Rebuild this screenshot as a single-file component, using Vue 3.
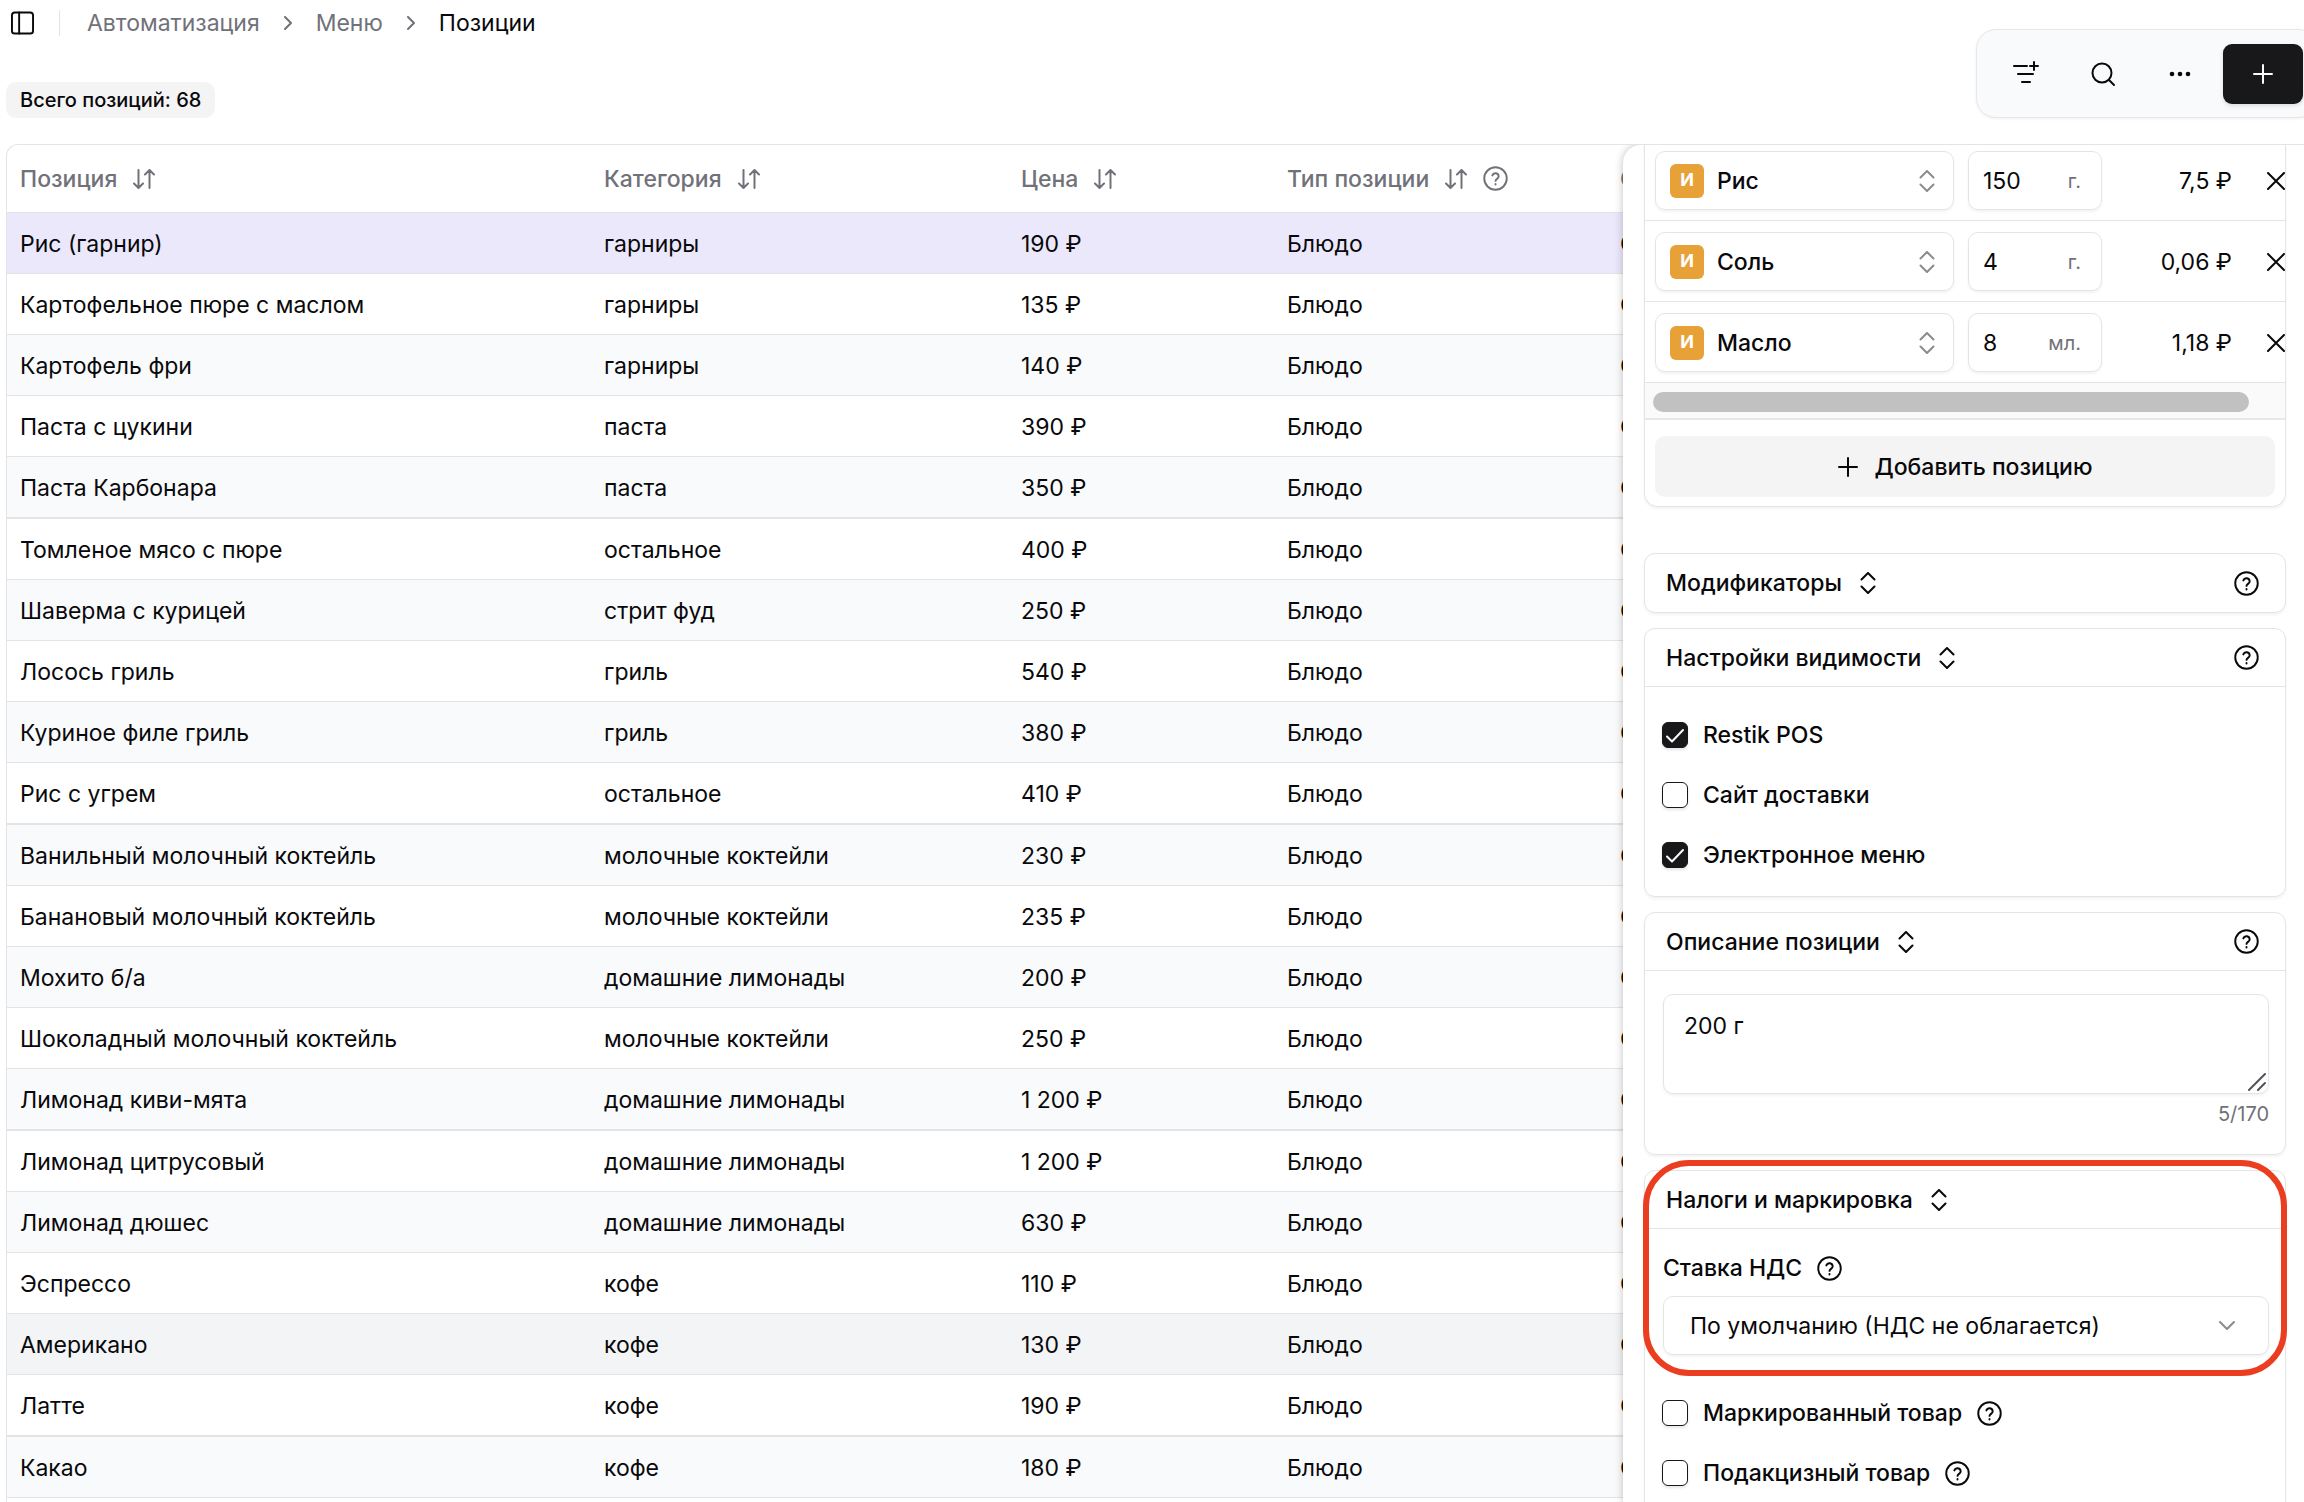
<template>
  <div class="page">
    <header class="page-header">
      <div class="header-left">
        <nav class="breadcrumbs" aria-label="breadcrumb">
          <button type="button" class="icon-btn" aria-label="Меню">
            <svg class="icon-panel" viewBox="0 0 24 24">
              <rect x="1" y="1" width="22" height="22" rx="3" />
              <path d="M8.5 1v22" />
            </svg>
          </button>
          <span class="divider"></span>
          <a href="#" class="crumb">Автоматизация</a>
          <svg class="icon-crumb" viewBox="0 0 8 14"><path d="M1 1l6 6-6 6" /></svg>
          <a href="#" class="crumb">Меню</a>
          <svg class="icon-crumb" viewBox="0 0 8 14"><path d="M1 1l6 6-6 6" /></svg>
          <span class="crumb current">Позиции</span>
        </nav>
        <span class="total">Всего позиций: 68</span>
      </div>

      <div class="toolbar">
        <button type="button" class="tool-btn" aria-label="Фильтр">
          <svg class="icon-tool" viewBox="0 0 26 26">
            <path d="M1 5h13M17 5h8M21 1v8M5 13h15M9 21h8" />
          </svg>
        </button>
        <button type="button" class="tool-btn" aria-label="Поиск">
          <svg class="icon-tool" viewBox="0 0 26 26">
            <circle cx="12" cy="12" r="9.5" />
            <path d="M19 19l5 5" />
          </svg>
        </button>
        <button type="button" class="tool-btn" aria-label="Ещё">
          <svg class="icon-tool dots" viewBox="0 0 26 26">
            <circle cx="5" cy="13" r="2.3" />
            <circle cx="13" cy="13" r="2.3" />
            <circle cx="21" cy="13" r="2.3" />
          </svg>
        </button>
        <button type="button" class="add-btn" aria-label="Добавить">
          <svg class="icon-plus" viewBox="0 0 20 20"><path d="M10 1v18M1 10h18" /></svg>
        </button>
      </div>
    </header>

    <main class="content">
      <div class="table-area">
        <table>
          <colgroup>
            <col />
            <col class="col-category" />
            <col class="col-price" />
            <col class="col-type" />
            <col class="col-cut" />
          </colgroup>
          <thead>
            <tr>
              <th v-for="column in columns" :key="column.title">
                <span class="th-inner">
                  {{ column.title }}
                  <svg v-if="column.sortable" class="icon-sort" viewBox="0 0 22 20">
                    <path d="M5.500 1v18M1 14.500L5.500 19l4.500-4.500M16.500 19V1M12 5.500L16.500 1L21 5.500" />
                  </svg>
                  <svg v-if="column.help" class="icon-help" viewBox="0 0 26 26">
                    <circle cx="13" cy="13" r="11.700" />
                    <path d="M9.700 9.800a3.400 3.400 0 0 1 6.600 1.100c0 2.200-3.300 2.700-3.300 4.600M13 18.600v.600" />
                  </svg>
                </span>
              </th>
            </tr>
          </thead>
          <tbody>
            <tr v-for="item in items" :key="item.name" :class="item.state">
              <td>{{ item.name }}</td>
              <td>{{ item.category }}</td>
              <td>{{ item.price }} ₽</td>
              <td>Блюдо</td>
              <td>С</td>
            </tr>
          </tbody>
        </table>
      </div>

      <aside class="panel">
        <section class="card ingredients">
          <div v-for="row in ingredients" :key="row.name" class="ingredient">
            <div class="field ingredient-name">
              <span class="badge">И</span>
              <select :aria-label="row.name">
                <option>{{ row.name }}</option>
              </select>
              <svg class="icon-updown muted" viewBox="0 0 16 22">
                <path d="M1.500 7.500L8 1l6.500 6.500M1.500 14.500L8 21l6.500-6.500" />
              </svg>
            </div>
            <label class="field amount">
              <input v-model="row.amount" type="text" :aria-label="row.name" />
              <span>{{ row.unit }}</span>
            </label>
            <span class="cost">{{ row.cost }} ₽</span>
            <button type="button" class="icon-btn" aria-label="Удалить">
              <svg class="icon-close" viewBox="0 0 18 18"><path d="M1 1l16 16M17 1L1 17" /></svg>
            </button>
          </div>
          <div class="scroll-track"><div class="scroll-thumb"></div></div>
          <div class="add-row">
            <button type="button" class="add-position">
              <svg class="icon-plus" viewBox="0 0 20 20"><path d="M10 1v18M1 10h18" /></svg>
              Добавить позицию
            </button>
          </div>
        </section>

        <section class="card">
          <div class="card-head">
            <button type="button" class="card-title">
              Модификаторы
              <svg class="icon-updown" viewBox="0 0 16 22">
                <path d="M1.500 7.500L8 1l6.500 6.500M1.500 14.500L8 21l6.500-6.500" />
              </svg>
            </button>
            <svg class="icon-help" viewBox="0 0 26 26">
              <circle cx="13" cy="13" r="11.700" />
              <path d="M9.700 9.800a3.400 3.400 0 0 1 6.600 1.100c0 2.200-3.300 2.700-3.300 4.600M13 18.600v.600" />
            </svg>
          </div>
        </section>

        <section class="card">
          <div class="card-head opened">
            <button type="button" class="card-title">
              Настройки видимости
              <svg class="icon-updown" viewBox="0 0 16 22">
                <path d="M1.500 7.500L8 1l6.500 6.500M1.500 14.500L8 21l6.500-6.500" />
              </svg>
            </button>
            <svg class="icon-help" viewBox="0 0 26 26">
              <circle cx="13" cy="13" r="11.700" />
              <path d="M9.700 9.800a3.400 3.400 0 0 1 6.600 1.100c0 2.200-3.300 2.700-3.300 4.600M13 18.600v.600" />
            </svg>
          </div>
          <div class="checks visibility">
            <label v-for="option in visibility" :key="option.label" class="check">
              <span class="box">
                <input v-model="option.checked" type="checkbox" />
                <svg v-if="option.checked" viewBox="0 0 26 26"><path d="M5 14.500l5 5L21 8" /></svg>
              </span>
              {{ option.label }}
            </label>
          </div>
        </section>

        <section class="card">
          <div class="card-head opened">
            <button type="button" class="card-title">
              Описание позиции
              <svg class="icon-updown" viewBox="0 0 16 22">
                <path d="M1.500 7.500L8 1l6.500 6.500M1.500 14.500L8 21l6.500-6.500" />
              </svg>
            </button>
            <svg class="icon-help" viewBox="0 0 26 26">
              <circle cx="13" cy="13" r="11.700" />
              <path d="M9.700 9.800a3.400 3.400 0 0 1 6.600 1.100c0 2.200-3.300 2.700-3.300 4.600M13 18.600v.600" />
            </svg>
          </div>
          <div class="description">
            <div class="textarea-wrap">
              <textarea v-model="description" aria-label="Описание позиции"></textarea>
              <svg class="icon-resize" viewBox="0 0 18 18"><path d="M1 17L17 1M10 17l7-7" /></svg>
            </div>
            <span class="counter">5/170</span>
          </div>
        </section>

        <section class="card">
          <div class="tax">
            <div class="card-head opened">
              <button type="button" class="card-title">
                Налоги и маркировка
                <svg class="icon-updown" viewBox="0 0 16 22">
                  <path d="M1.500 7.500L8 1l6.500 6.500M1.500 14.500L8 21l6.500-6.500" />
                </svg>
              </button>
            </div>
            <div class="tax-body">
              <label for="vat" class="tax-label">
                Ставка НДС
                <svg class="icon-help" viewBox="0 0 26 26">
                  <circle cx="13" cy="13" r="11.700" />
                  <path d="M9.700 9.800a3.400 3.400 0 0 1 6.600 1.100c0 2.200-3.300 2.700-3.300 4.600M13 18.600v.600" />
                </svg>
              </label>
              <div class="field vat">
                <select id="vat">
                  <option>По умолчанию (НДС не облагается)</option>
                </select>
                <svg class="icon-down muted" viewBox="0 0 16 10"><path d="M1 1l7 7 7-7" /></svg>
              </div>
            </div>
            <div class="highlight"></div>
          </div>
          <div class="checks marking">
            <label v-for="option in marking" :key="option.label" class="check">
              <span class="box">
                <input v-model="option.checked" type="checkbox" />
                <svg v-if="option.checked" viewBox="0 0 26 26"><path d="M5 14.500l5 5L21 8" /></svg>
              </span>
              {{ option.label }}
              <svg class="icon-help" viewBox="0 0 26 26">
                <circle cx="13" cy="13" r="11.700" />
                <path d="M9.700 9.800a3.400 3.400 0 0 1 6.600 1.100c0 2.200-3.300 2.700-3.300 4.600M13 18.600v.600" />
              </svg>
            </label>
          </div>
        </section>
      </aside>
    </main>
  </div>
</template>

<script setup>
import { ref } from 'vue'

const columns = [
  { title: 'Позиция', sortable: true },
  { title: 'Категория', sortable: true },
  { title: 'Цена', sortable: true },
  { title: 'Тип позиции', sortable: true, help: true },
  { title: 'С' }
]

const items = [
  { name: 'Рис (гарнир)', category: 'гарниры', price: '190', state: 'selected' },
  { name: 'Картофельное пюре с маслом', category: 'гарниры', price: '135' },
  { name: 'Картофель фри', category: 'гарниры', price: '140' },
  { name: 'Паста с цукини', category: 'паста', price: '390' },
  { name: 'Паста Карбонара', category: 'паста', price: '350' },
  { name: 'Томленое мясо с пюре', category: 'остальное', price: '400' },
  { name: 'Шаверма с курицей', category: 'стрит фуд', price: '250' },
  { name: 'Лосось гриль', category: 'гриль', price: '540' },
  { name: 'Куриное филе гриль', category: 'гриль', price: '380' },
  { name: 'Рис с угрем', category: 'остальное', price: '410' },
  { name: 'Ванильный молочный коктейль', category: 'молочные коктейли', price: '230' },
  { name: 'Банановый молочный коктейль', category: 'молочные коктейли', price: '235' },
  { name: 'Мохито б/а', category: 'домашние лимонады', price: '200' },
  { name: 'Шоколадный молочный коктейль', category: 'молочные коктейли', price: '250' },
  { name: 'Лимонад киви-мята', category: 'домашние лимонады', price: '1 200' },
  { name: 'Лимонад цитрусовый', category: 'домашние лимонады', price: '1 200' },
  { name: 'Лимонад дюшес', category: 'домашние лимонады', price: '630' },
  { name: 'Эспрессо', category: 'кофе', price: '110' },
  { name: 'Американо', category: 'кофе', price: '130', state: 'hovered' },
  { name: 'Латте', category: 'кофе', price: '190' },
  { name: 'Какао', category: 'кофе', price: '180' }
]

const ingredients = ref([
  { name: 'Рис', amount: '150', unit: 'г.', cost: '7,5' },
  { name: 'Соль', amount: '4', unit: 'г.', cost: '0,06' },
  { name: 'Масло', amount: '8', unit: 'мл.', cost: '1,18' }
])

const visibility = ref([
  { label: 'Restik POS', checked: true },
  { label: 'Сайт доставки', checked: false },
  { label: 'Электронное меню', checked: true }
])

const marking = ref([
  { label: 'Маркированный товар', checked: false },
  { label: 'Подакцизный товар', checked: false }
])

const description = ref('200 г')
</script>

<style>
body {
  background: #fff;
}
</style>

<style scoped>
* {
  box-sizing: border-box;
}

.page {
  height: 100vh;
  overflow: hidden;
  display: flex;
  flex-direction: column;
  font-family: Inter, "Liberation Sans", sans-serif;
  font-size: 23px;
  line-height: 32px;
  color: #09090b;
}

button,
input,
select,
textarea {
  font: inherit;
  color: inherit;
  background: none;
  border: none;
  padding: 0;
  margin: 0;
  outline: none;
}

svg {
  fill: none;
  stroke: currentColor;
  stroke-width: 2;
  stroke-linecap: round;
  stroke-linejoin: round;
  flex-shrink: 0;
}

/* header */
.page-header {
  display: flex;
  justify-content: space-between;
  height: 144px;
  flex-shrink: 0;
  padding-left: 6px;
}

.breadcrumbs {
  display: flex;
  align-items: center;
  height: 45px;
  padding-left: 5px;
}

.icon-btn {
  display: flex;
}

.icon-panel {
  width: 23px;
  height: 24px;
}

.divider {
  width: 1px;
  height: 26px;
  background: #e4e4e7;
  margin: 0 27px 0 25px;
}

.crumb {
  color: #71717a;
  text-decoration: none;
}

.crumb.current {
  color: #09090b;
}

.icon-crumb {
  width: 8px;
  height: 14px;
  margin: 0 24px;
  color: #71717a;
}

.total {
  display: inline-block;
  margin-top: 37px;
  padding: 0 14px;
  font-size: 20px;
  font-weight: 500;
  line-height: 36px;
  background: #f4f4f5;
  border-radius: 10px;
}

.toolbar {
  display: flex;
  align-items: center;
  height: 89px;
  margin: 29px -14px 0 0;
  padding: 0 14px 0 10px;
  background: #f9fafc;
  border: 1px solid #e5e7eb;
  border-radius: 20px;
  box-shadow: 0 1px 3px rgba(0, 0, 0, 0.06);
}

.tool-btn {
  display: flex;
  justify-content: center;
  width: 77px;
}

.icon-tool {
  width: 26px;
  height: 26px;
}

.icon-tool.dots {
  fill: currentColor;
  stroke: none;
}

.add-btn {
  display: flex;
  align-items: center;
  justify-content: center;
  width: 80px;
  height: 60px;
  margin-left: 5px;
  color: #fafafa;
  background: #18181b;
  border-radius: 9px;
  box-shadow: 0 2px 4px rgba(0, 0, 0, 0.12);
}

.icon-plus {
  width: 20px;
  height: 20px;
}

/* table */
.content {
  flex: 1;
  min-height: 0;
  display: grid;
  grid-template-columns: minmax(0, 1fr) 681px;
  margin-left: 6px;
  border: 1px solid #e4e4e7;
  border-width: 1px 0 0 1px;
  border-radius: 12px 0 0 0;
  overflow: hidden;
}

.table-area {
  overflow: hidden;
}

table {
  width: 100%;
  table-layout: fixed;
  border-collapse: separate;
  border-spacing: 0;
}

.col-category {
  width: 417px;
}

.col-price {
  width: 266px;
}

.col-type {
  width: 333px;
}

.col-cut {
  width: 16px;
}

th,
td {
  padding: 0 0 0 13px;
  text-align: left;
  white-space: nowrap;
  overflow: hidden;
  border-bottom: 1px solid #e4e4e7;
}

th {
  height: 68px;
  font-weight: 500;
  color: #71717a;
}

.th-inner {
  display: flex;
  align-items: center;
  gap: 16px;
}

td {
  height: 61px;
  padding-top: 2px;
}

tbody tr:nth-child(odd) td {
  background: #f9fafc;
}

tbody tr:nth-child(5n) td {
  height: 62px;
  border-bottom-width: 2px;
}

tbody tr.selected td {
  background: #ebe8fc;
}

tbody tr.hovered td {
  background: #f3f4f6;
}

.icon-sort {
  width: 22px;
  height: 20px;
}

.icon-help {
  width: 25px;
  height: 25px;
}

/* side panel */
.panel {
  z-index: 1;
  padding: 0 18px 0 21px;
  background: #fff;
  border-radius: 18px 0 0 0;
  box-shadow: 0 0 8px rgba(0, 0, 0, 0.25);
  overflow: hidden;
}

.card {
  margin-bottom: 15px;
  border: 1px solid #e4e4e7;
  border-radius: 11px;
  box-shadow: 0 2px 3px rgba(0, 0, 0, 0.05);
}

.ingredients {
  margin-bottom: 46px;
  border-top: none;
  border-radius: 0 0 14px 14px;
}

.ingredient {
  display: flex;
  align-items: center;
  padding: 11px 0 10px 10px;
  border-bottom: 1px solid #e4e4e7;
  overflow: hidden;
}

.ingredient:first-child {
  padding-top: 6px;
}

.field {
  display: flex;
  align-items: center;
  height: 59px;
  border: 1px solid #e4e4e7;
  border-radius: 10px;
  box-shadow: 0 2px 3px rgba(0, 0, 0, 0.05);
}

.field select {
  flex: 1;
  min-width: 0;
  appearance: none;
}

.ingredient-name {
  flex: 1;
  padding: 0 18px 0 14px;
  font-weight: 500;
}

.badge {
  width: 34px;
  height: 34px;
  margin-right: 13px;
  font-size: 18px;
  font-weight: 700;
  line-height: 32px;
  text-align: center;
  color: #fff;
  background: #e8a137;
  border-radius: 6px;
}

.amount {
  width: 134px;
  margin-left: 14px;
  padding: 0 20px 0 14px;
}

.amount input {
  flex: 1;
  min-width: 0;
}

.amount span {
  font-size: 20px;
  color: #71717a;
}

.cost {
  width: 130px;
  text-align: right;
}

.ingredient .icon-btn {
  margin-left: 35px;
}

.icon-close {
  width: 18px;
  height: 18px;
}

.icon-updown {
  width: 16px;
  height: 22px;
}

.icon-down {
  width: 16px;
  height: 10px;
}

.muted {
  color: #8b8b90;
}

.scroll-track {
  height: 37px;
  padding: 9px 8px 0;
  background: #fafafa;
  border-bottom: 2px solid #e8e8e8;
}

.scroll-thumb {
  width: 596px;
  height: 20px;
  background: #c1c1c1;
  border-radius: 10px;
}

.add-row {
  padding: 16px 10px 9px;
}

.add-position {
  display: flex;
  align-items: center;
  justify-content: center;
  gap: 17px;
  width: 100%;
  height: 61px;
  font-weight: 500;
  background: #f4f4f5;
  border-radius: 10px;
}

.card-head {
  display: flex;
  align-items: center;
  justify-content: space-between;
  height: 58px;
  padding: 0 26px 0 21px;
}

.card-head.opened {
  border-bottom: 1px solid #e4e4e7;
}

.card-title {
  display: flex;
  align-items: center;
  gap: 18px;
  font-weight: 500;
}

.checks {
  display: flex;
  flex-direction: column;
  gap: 28px;
  padding: 0 17px 25px;
}

.visibility {
  padding-top: 32px;
}

.marking {
  padding-top: 42px;
  padding-bottom: 60px;
}

.check {
  display: flex;
  align-items: center;
  gap: 15px;
  font-weight: 500;
}

.box {
  display: grid;
  width: 26px;
  height: 26px;
}

.box input {
  grid-area: 1 / 1;
  appearance: none;
  width: 26px;
  height: 26px;
  border: 1px solid #18181b;
  border-radius: 6px;
  box-shadow: 0 2px 3px rgba(0, 0, 0, 0.1);
}

.box input:checked {
  background: #18181b;
}

.box svg {
  grid-area: 1 / 1;
  color: #fafafa;
  pointer-events: none;
}

.description {
  display: flex;
  flex-direction: column;
  padding: 23px 16px 24px 18px;
}

.textarea-wrap {
  position: relative;
  display: flex;
}

textarea {
  flex: 1;
  height: 100px;
  padding: 15px 20px;
  border: 1px solid #e4e4e7;
  border-radius: 10px;
  box-shadow: 0 2px 3px rgba(0, 0, 0, 0.05);
  resize: none;
}

.icon-resize {
  position: absolute;
  right: 3px;
  bottom: 3px;
  width: 18px;
  height: 18px;
  color: #52525b;
}

.counter {
  margin-top: 4px;
  font-size: 20px;
  text-align: right;
  color: #71717a;
}

.tax {
  position: relative;
}

.tax-body {
  padding: 23px 16px 0 18px;
}

.tax-label {
  display: flex;
  align-items: center;
  gap: 15px;
  margin-bottom: 12px;
  font-weight: 500;
}

.vat {
  padding: 0 33px 0 26px;
}

/* red frame around the tax settings */
.highlight {
  position: absolute;
  inset: -11px -2px -21px;
  border: 6px solid #eb3d20;
  border-radius: 46px;
  pointer-events: none;
}
</style>
